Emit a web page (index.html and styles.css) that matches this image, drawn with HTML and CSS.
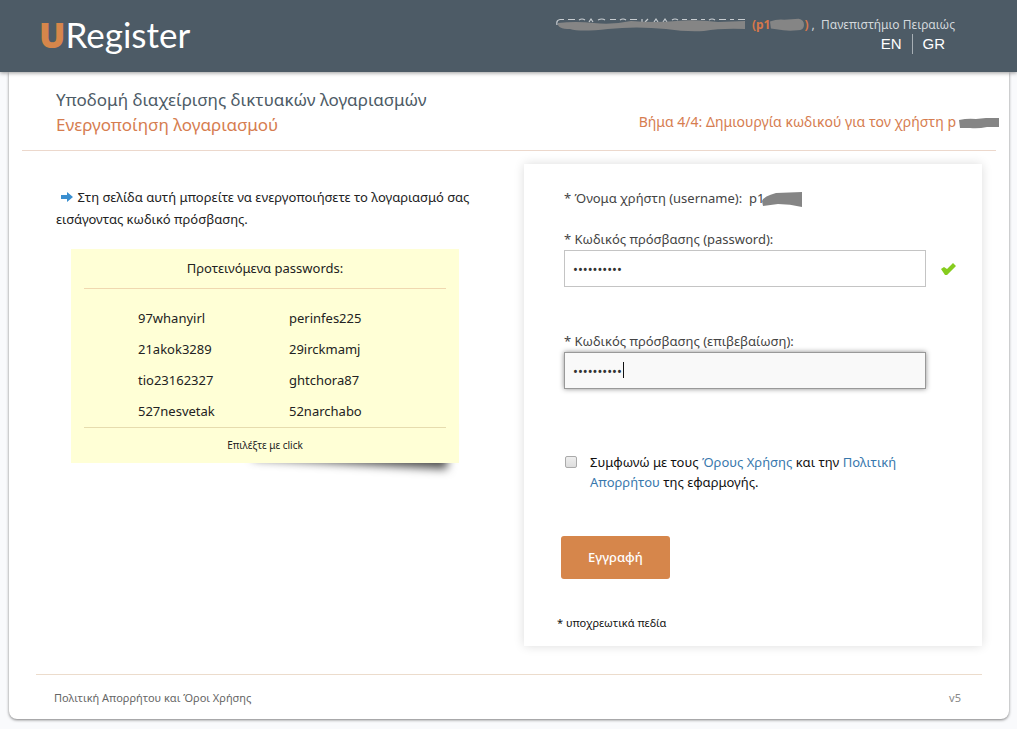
FILE: index.html
```html
<!DOCTYPE html>
<html lang="el">
<head>
<meta charset="utf-8">
<meta name="viewport" content="width=device-width, initial-scale=1">
<title>URegister</title>
<link rel="stylesheet" href="styles.css">
</head>
<body>
<header class="topbar">
  <div class="logo"><b>U</b>Register</div>
  <div class="session">
    <div class="user">
      <svg class="name-mask" width="190" height="16" viewBox="0 0 190 16" role="img" aria-label="Κρυμμένο όνομα">
        <path d="M1 8Q0 3 4 2.500h4M12 2.500h7M23 3q3-2 6 0M33 5l2-3 2 3M42 3q4-2 7 0M54 2.500h6M64 3q3-2 6 0M74 2.500h7M86 2v4M92 2l-3 3M98 5l2-3 2 3M107 5l2-3 2 3M116 3q3-2 6 0M126 2.500h5M135 2.500h6M145 2.500h4M153 3q3-2 6 0M163 2.500h7M174 2.500h4M182 2.500h7" fill="none" stroke="#c8cdd1" stroke-width="1.200"/>
        <path d="M2 6Q20 4 38 6T75 4Q100 6 120 4T162 5L189 4V12Q165 11 148 14Q130 15 110 12Q80 9 52 12T14 12Q1 12 2 6Z" fill="#858585"/>
      </svg>
      <span class="uid">(p1<svg class="uid-mask" width="34" height="14" viewBox="0 0 38 14" aria-hidden="true"><path d="M0 3Q8 0 16 1L32 0Q38 1 38 7T31 13Q22 14 15 13L1 11Z" fill="#858585"/></svg>)</span>
      <span class="org">, &nbsp;Πανεπιστήμιο Πειραιώς</span>
    </div>
    <nav class="langs"><a href="#en">EN</a><a href="#gr">GR</a></nav>
  </div>
</header>

<div class="page">
  <div class="heading">
    <h1>Υποδομή διαχείρισης δικτυακών λογαριασμών<span>Ενεργοποίηση λογαριασμού</span></h1>
    <p class="step">Βήμα 4/4: Δημιουργία κωδικού για τον χρήστη p<svg width="42" height="12" viewBox="0 0 42 12" aria-hidden="true"><path d="M1 3Q10 1 18 2L28 1L41 1V10L29 10Q20 12 12 11L2 11Z" fill="#858585"/></svg></p>
  </div>

  <main class="columns">
    <section class="intro">
      <p class="lead"><svg width="14" height="10" viewBox="0 0 14 10" aria-hidden="true"><path d="M1 3H7V0L13 5L7 10V7H1Z" fill="#3a8fd0"/></svg> Στη σελίδα αυτή μπορείτε να ενεργοποιήσετε το λογαριασμό σας εισάγοντας κωδικό πρόσβασης.</p>
      <div class="note-wrap">
        <div class="note">
          <h2>Προτεινόμενα passwords:</h2>
          <ul>
            <li>97whanyirl</li><li>perinfes225</li>
            <li>21akok3289</li><li>29irckmamj</li>
            <li>tio23162327</li><li>ghtchora87</li>
            <li>527nesvetak</li><li>52narchabo</li>
          </ul>
          <p>Επιλέξτε με click</p>
        </div>
      </div>
    </section>

    <form class="panel">
      <p class="username">* Όνομα χρήστη (username): &nbsp;p1<svg width="40" height="16" viewBox="0 0 40 16" aria-hidden="true"><path d="M0 9Q2 4 14 1L40 0V15Q28 12 16 12L1 14Z" fill="#858585"/></svg></p>
      <div class="field">
        <label for="pass">* Κωδικός πρόσβασης (password):</label>
        <div class="entry">
          <input id="pass" type="password" value="abcdefghij">
          <svg width="16" height="14" viewBox="0 0 16 14" role="img" aria-label="Έγκυρο"><path d="M0 7L3 5L6 7L12 1L15 4L6 13H4Z" fill="#86cc1e"/></svg>
        </div>
      </div>
      <div class="field">
        <label for="confirm">* Κωδικός πρόσβασης (επιβεβαίωση):</label>
        <div class="entry active">
          <input id="confirm" type="password" value="abcdefghij">
          <i class="caret"></i>
        </div>
      </div>
      <div class="agree">
        <input id="agree" type="checkbox">
        <label for="agree">Συμφωνώ με τους <a href="#terms">Όρους Χρήσης</a> και την <a href="#privacy">Πολιτική Απορρήτου</a> της εφαρμογής.</label>
      </div>
      <button type="submit">Εγγραφή</button>
      <p class="required">* υποχρεωτικά πεδία</p>
    </form>
  </main>

  <footer class="footer">
    <a href="#policy">Πολιτική Απορρήτου και Όροι Χρήσης</a>
    <span>v5</span>
  </footer>
</div>
</body>
</html>
```
FILE: styles.css
```css
* { box-sizing: border-box; }
body {
  margin: 0;
  background: #f9fafc;
  color: #222;
  font: 13px/22px "Noto Sans", "Open Sans", sans-serif;
}
h1, h2, p, ul { margin: 0; padding: 0; font-weight: 400; }
a { text-decoration: none; }

.topbar {
  position: relative;
  z-index: 1;
  display: flex;
  justify-content: space-between;
  height: 72px;
  padding: 11px 62px 0 39px;
  background: #4d5b66;
  box-shadow: 0 1px 4px rgba(0, 0, 0, .4);
}
.logo { font: 35px/46px Lato, sans-serif; color: #fff; }
.logo b { font-family: "Open Sans", sans-serif; font-weight: 800; color: #d6864b; }
.session { display: flex; flex-direction: column; align-items: flex-end; padding-top: 5px; }
.user { display: flex; align-items: center; height: 18px; font-size: 12px; color: #d3d8dc; white-space: nowrap; }
.uid { display: flex; align-items: center; margin: 0 3px 0 6px; color: #d6774a; font-weight: 700; }
.langs { display: flex; font: 15px/20px "Liberation Sans", sans-serif; }
.langs a { padding: 0 10px; color: #fff; }
.langs a + a { border-left: 1px solid #a7afb5; }

.page {
  margin: 0 8px 9px 9px;
  padding: 0 13px;
  background: #fff;
  border-radius: 0 0 8px 8px;
  box-shadow: 0 1px 3px rgba(0, 0, 0, .5);
}
.heading {
  display: flex;
  justify-content: space-between;
  height: 79px;
  padding: 15px 0 0 34px;
  border-bottom: 1px solid #ecd8cc;
}
h1 { font-size: 17px; line-height: 25px; color: #4d5b66; }
h1 span { display: block; color: #d67d50; }
.step { margin-right: -4px; padding-top: 24px; font-size: 14px; color: #d67d50; white-space: nowrap; }
.step svg { margin-left: 2px; vertical-align: middle; }

.columns {
  display: grid;
  grid-template-columns: minmax(0, 420px) minmax(0, 458px);
  justify-content: space-between;
  padding: 13px 14px 0 34px;
}
.intro { padding-top: 22px; }
.lead svg { margin-left: 4px; }
.note-wrap { position: relative; z-index: 0; margin: 19px 17px 0 15px; }
.note-wrap::after {
  content: "";
  position: absolute;
  z-index: -1;
  right: 10px;
  bottom: 14px;
  width: 50%;
  height: 20%;
  box-shadow: 0 15px 10px rgba(0, 0, 0, .7);
  transform: rotate(3deg);
}
.note { padding: 8px 13px 7px; background: #ffffd6; text-align: center; }
.note h2 { padding-bottom: 9px; font-size: 13px; border-bottom: 1px solid #f0d8b0; }
.note ul {
  display: grid;
  grid-template-columns: 151px 1fr;
  row-gap: 9px;
  padding: 18px 0 5px 54px;
  border-bottom: 1px solid #e6dcae;
  list-style: none;
  text-align: left;
}
.note p { padding-top: 6px; font-size: 10px; }

.panel { padding: 23px 24px 12px 40px; box-shadow: 0 0 10px rgba(0, 0, 0, .14); color: #444; }
.username { margin-bottom: 19px; }
.username svg { margin-left: -2px; vertical-align: middle; }
.field { margin-bottom: 43px; }
.field label { display: block; height: 22px; }
.entry { position: relative; display: flex; align-items: center; gap: 15px; width: calc(100% - 1px); }
.entry input {
  flex: 0 1 362px;
  min-width: 0;
  height: 37px;
  padding: 0 8px;
  border: 1px solid #c4c4c4;
  background: #fff;
  color: #333;
  font: 13px/20px "Noto Sans", sans-serif;
}
.active input { border-color: #999; background: #f9f9f9; box-shadow: 0 0 5px rgba(0, 0, 0, .45); }
.caret { position: absolute; left: 59px; top: 10px; width: 1px; height: 16px; background: #111; }
.agree { display: flex; align-items: flex-start; gap: 13px; margin-top: 63px; padding-right: 40px; color: #111; line-height: 20px; }
.agree input {
  appearance: none;
  flex: none;
  width: 12px;
  height: 12px;
  margin: 4px 0 0 1px;
  border: 1px solid #aaa;
  border-radius: 2px;
  background: linear-gradient(#eee, #ddd);
}
.agree a { color: #3878ad; }
.panel button {
  display: block;
  margin: 44px 0 0 -3px;
  padding: 10px 27px;
  border: 0;
  border-radius: 3px;
  background: #d6864b;
  color: #fff;
  font: 500 13px/23px "Noto Sans", sans-serif;
}
.required { margin: 33px 0 0 -7px; font-size: 11px; color: #111; }

.footer {
  display: flex;
  justify-content: space-between;
  margin: 28px 14px 0;
  padding: 12px 21px 10px 18px;
  border-top: 1px solid #ecdccc;
  font-size: 11px;
  color: #888;
}
.footer a { color: #666; }
```
